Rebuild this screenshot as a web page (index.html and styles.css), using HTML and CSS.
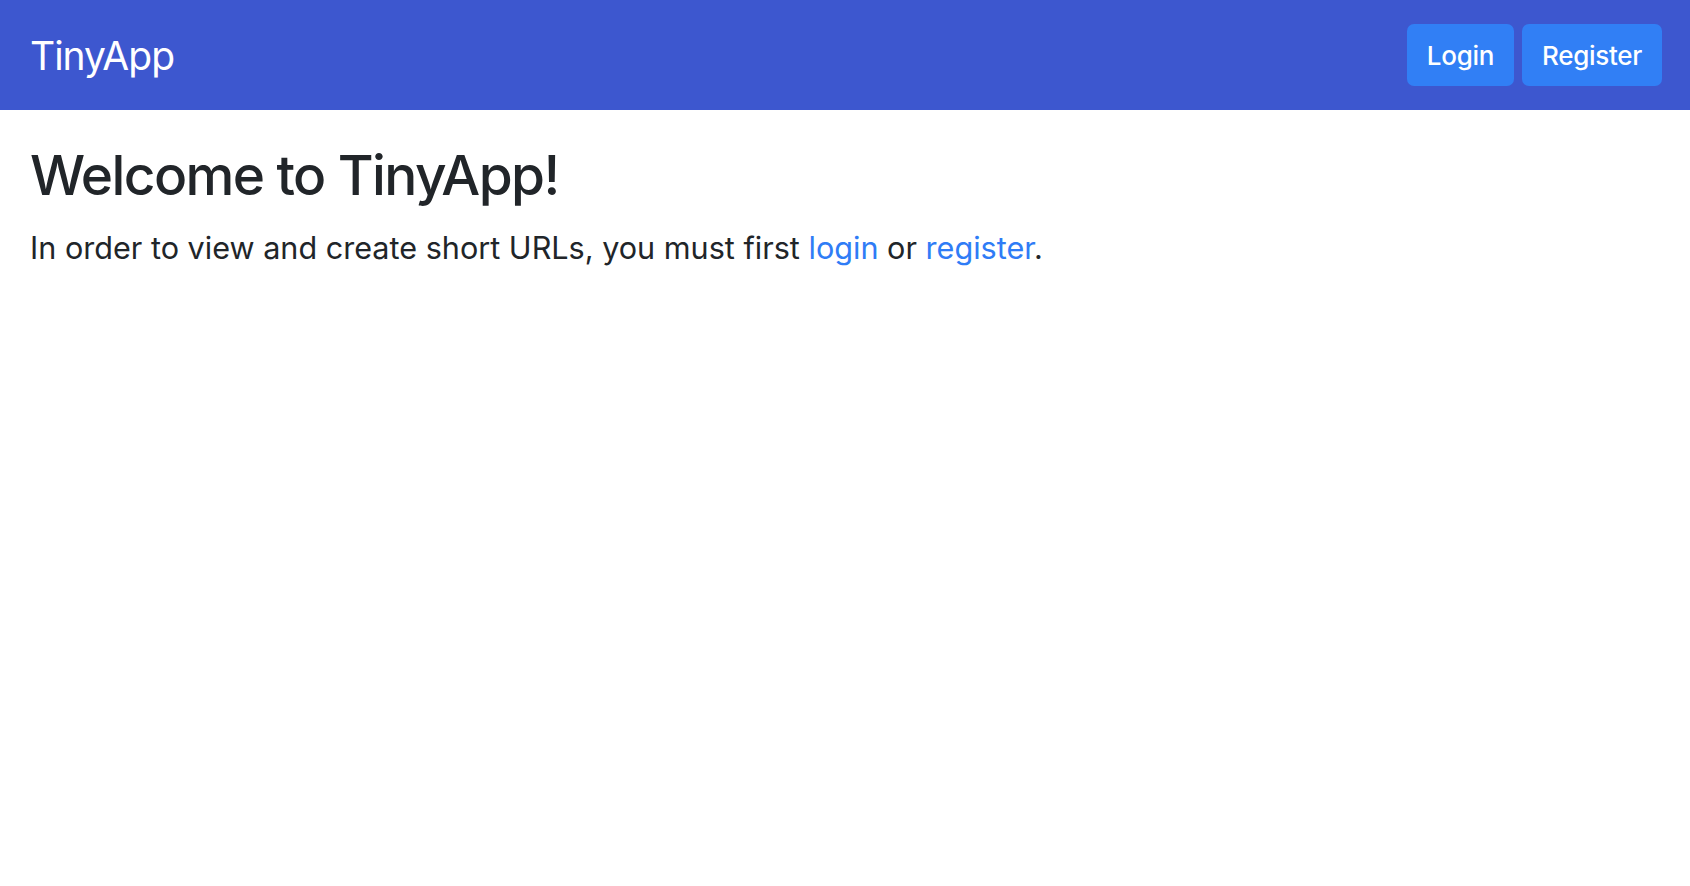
FILE: index.html
```html
<!DOCTYPE html>
<html lang="en">
<head>
<meta charset="utf-8">
<title>TinyApp</title>
<link rel="stylesheet" href="styles.css">
</head>
<body>
<nav class="navbar">
  <a class="brand" href="#">TinyApp</a>
  <div class="nav-actions">
    <a class="btn" href="#">Login</a>
    <a class="btn" href="#">Register</a>
  </div>
</nav>
<main class="content">
  <h1 class="title">Welcome to TinyApp!</h1>
  <p class="lead">In order to view and create short URLs, you must first <a class="link" href="#">login</a> or <a class="link" href="#">register</a>.</p>
</main>
</body>
</html>
```
FILE: styles.css
```css
* { box-sizing: border-box; }
html, body { margin: 0; padding: 0; }
body {
  font-family: Inter, "Noto Sans", "Liberation Sans", sans-serif;
  color: #212529;
  background: #ffffff;
}
.navbar {
  height: 110px;
  background: #3d57cf;
  display: flex;
  align-items: center;
  justify-content: space-between;
  padding: 0 28px 0 30px;
}
.brand {
  color: #ffffff;
  text-decoration: none;
  font-size: 39px;
  font-weight: 400;
  letter-spacing: -1px;
}
.nav-actions {
  display: flex;
  gap: 8px;
}
.btn {
  display: inline-block;
  background: #317ff5;
  color: #ffffff;
  text-decoration: none;
  font-size: 26px;
  font-weight: 500;
  letter-spacing: -0.3px;
  line-height: 39px;
  padding: 11.5px 20px;
  border-radius: 7px;
}
.content {
  padding: 0 30px;
}
.title {
  margin: 32px 0 0;
  font-size: 55px;
  font-weight: 500;
  line-height: 1.2;
  letter-spacing: -1.6px;
}
.lead {
  margin: 17px 0 0;
  font-size: 30.6px;
  line-height: 1.5;
}
.link {
  color: #2f7cf6;
  text-decoration: none;
}
```
